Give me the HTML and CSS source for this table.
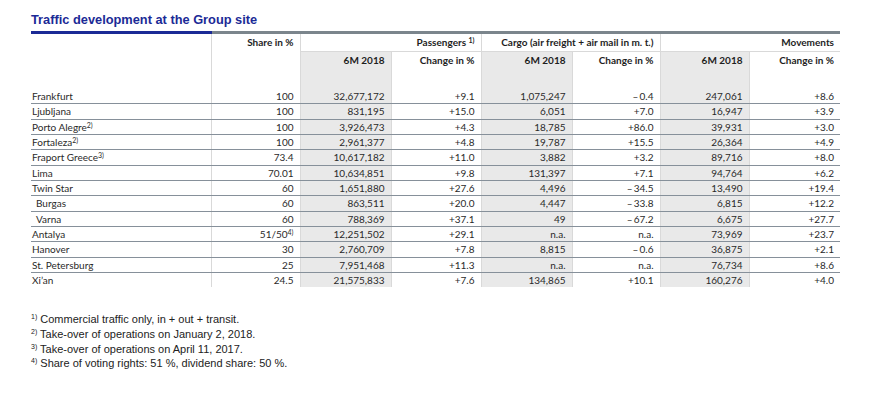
FILE: index.html
```html
<!DOCTYPE html>
<html lang="en">
<head>
<meta charset="utf-8">
<title>Traffic development at the Group site</title>
<link rel="stylesheet" href="styles.css">
</head>
<body>
<div class="page">
  <h1 class="title">Traffic development at the Group site</h1>
  <table class="traffic">
    <colgroup>
      <col class="c-lbl"><col class="c-share"><col class="c-g"><col class="c-w"><col class="c-g"><col class="c-w2"><col class="c-share"><col class="c-g">
    </colgroup>
    <thead>
      <tr class="hr1">
        <th class="lbl" rowspan="2"></th>
        <th rowspan="2">Share in %</th>
        <th colspan="2" class="grp">Passengers <sup>1)</sup></th>
        <th colspan="2" class="grp">Cargo (air freight + air mail in m. t.)</th>
        <th colspan="2" class="grp">Movements</th>
      </tr>
      <tr class="hr2">
        <th class="g">6M 2018</th><th>Change in %</th>
        <th class="g">6M 2018</th><th>Change in %</th>
        <th class="g">6M 2018</th><th>Change in %</th>
      </tr>
    </thead>
    <tbody>
      <tr><td class="lbl">Frankfurt</td><td>100</td><td class="g">32,677,172</td><td>+9.1</td><td class="g">1,075,247</td><td>–&#8201;0.4</td><td class="g">247,061</td><td>+8.6</td></tr>
      <tr><td class="lbl">Ljubljana</td><td>100</td><td class="g">831,195</td><td>+15.0</td><td class="g">6,051</td><td>+7.0</td><td class="g">16,947</td><td>+3.9</td></tr>
      <tr><td class="lbl">Porto Alegre<sup>2)</sup></td><td>100</td><td class="g">3,926,473</td><td>+4.3</td><td class="g">18,785</td><td>+86.0</td><td class="g">39,931</td><td>+3.0</td></tr>
      <tr><td class="lbl">Fortaleza<sup>2)</sup></td><td>100</td><td class="g">2,961,377</td><td>+4.8</td><td class="g">19,787</td><td>+15.5</td><td class="g">26,364</td><td>+4.9</td></tr>
      <tr><td class="lbl">Fraport Greece<sup>3)</sup></td><td>73.4</td><td class="g">10,617,182</td><td>+11.0</td><td class="g">3,882</td><td>+3.2</td><td class="g">89,716</td><td>+8.0</td></tr>
      <tr><td class="lbl">Lima</td><td>70.01</td><td class="g">10,634,851</td><td>+9.8</td><td class="g">131,397</td><td>+7.1</td><td class="g">94,764</td><td>+6.2</td></tr>
      <tr><td class="lbl">Twin Star</td><td>60</td><td class="g">1,651,880</td><td>+27.6</td><td class="g">4,496</td><td>–&#8201;34.5</td><td class="g">13,490</td><td>+19.4</td></tr>
      <tr><td class="lbl sub">Burgas</td><td>60</td><td class="g">863,511</td><td>+20.0</td><td class="g">4,447</td><td>–&#8201;33.8</td><td class="g">6,815</td><td>+12.2</td></tr>
      <tr><td class="lbl sub">Varna</td><td>60</td><td class="g">788,369</td><td>+37.1</td><td class="g">49</td><td>–&#8201;67.2</td><td class="g">6,675</td><td>+27.7</td></tr>
      <tr><td class="lbl">Antalya</td><td>51/50<sup>4)</sup></td><td class="g">12,251,502</td><td>+29.1</td><td class="g">n.a.</td><td>n.a.</td><td class="g">73,969</td><td>+23.7</td></tr>
      <tr><td class="lbl">Hanover</td><td>30</td><td class="g">2,760,709</td><td>+7.8</td><td class="g">8,815</td><td>–&#8201;0.6</td><td class="g">36,875</td><td>+2.1</td></tr>
      <tr><td class="lbl">St. Petersburg</td><td>25</td><td class="g">7,951,468</td><td>+11.3</td><td class="g">n.a.</td><td>n.a.</td><td class="g">76,734</td><td>+8.6</td></tr>
      <tr><td class="lbl">Xi’an</td><td>24.5</td><td class="g">21,575,833</td><td>+7.6</td><td class="g">134,865</td><td>+10.1</td><td class="g">160,276</td><td>+4.0</td></tr>
    </tbody>
  </table>
  <ul class="notes">
    <li><sup>1)</sup> Commercial traffic only, in + out + transit.</li>
    <li><sup>2)</sup> Take-over of operations on January 2, 2018.</li>
    <li><sup>3)</sup> Take-over of operations on April 11, 2017.</li>
    <li><sup>4)</sup> Share of voting rights: 51 %, dividend share: 50 %.</li>
  </ul>
</div>
</body>
</html>
```
FILE: styles.css
```css
body {
  margin: 0;
  background: #ffffff;
  color: #222222;
  font-family: Lato, "Liberation Sans", sans-serif;
}

.page {
  padding: 12px 0 0 31px;
}

.title {
  margin: 0 0 3px;
  font: bold 12.8px/16px "Liberation Sans", Arial, sans-serif;
  color: #1b2a96;
}

.traffic {
  border-collapse: collapse;
  table-layout: fixed;
  width: 809px;
  font-size: 10px;
}

.c-lbl { width: 180px; }
.c-share { width: 89px; }
.c-g { width: 91px; }
.c-w { width: 90px; }
.c-w2 { width: 88px; }

.traffic th,
.traffic td {
  padding: 0 6px 0 4px;
  text-align: right;
  white-space: nowrap;
  overflow: visible;
}

.traffic thead th {
  font-weight: 700;
  vertical-align: top;
  line-height: 17px;
  color: #1e1e1e;
  border-left: 1px solid #d9d9d9;
  border-top: 3px solid #7b858c;
}

.traffic thead th.lbl {
  border-left: none;
  border-top-color: #1b2a96;
}

.traffic .hr1 .grp {
  border-bottom: 1px solid #d9d9d9;
}

.traffic .hr2 th {
  height: 37px;
  border-top: 1px solid #d9d9d9;
}

.traffic tbody td {
  height: 14.33px;
  line-height: 14.33px;
  border-left: 1px solid #d9d9d9;
  border-bottom: 1px solid #86909a;
  color: #2a2a2a;
}

.traffic tbody tr:last-child td {
  border-bottom: none;
}

.traffic td.lbl {
  text-align: left;
  padding-left: 1px;
  border-left: none;
}

.traffic td.sub {
  padding-left: 5px;
}

.traffic .g {
  background: #e9e9e9;
}

.traffic sup {
  font-size: 7px;
  line-height: 0;
  vertical-align: 3px;
}

.notes {
  margin: 25px 0 0;
  padding: 0;
  list-style: none;
  font: 11px/14.7px "Liberation Sans", Arial, sans-serif;
  color: #222222;
}

.notes sup {
  font-size: 7px;
  line-height: 0;
  vertical-align: 4px;
}
```
